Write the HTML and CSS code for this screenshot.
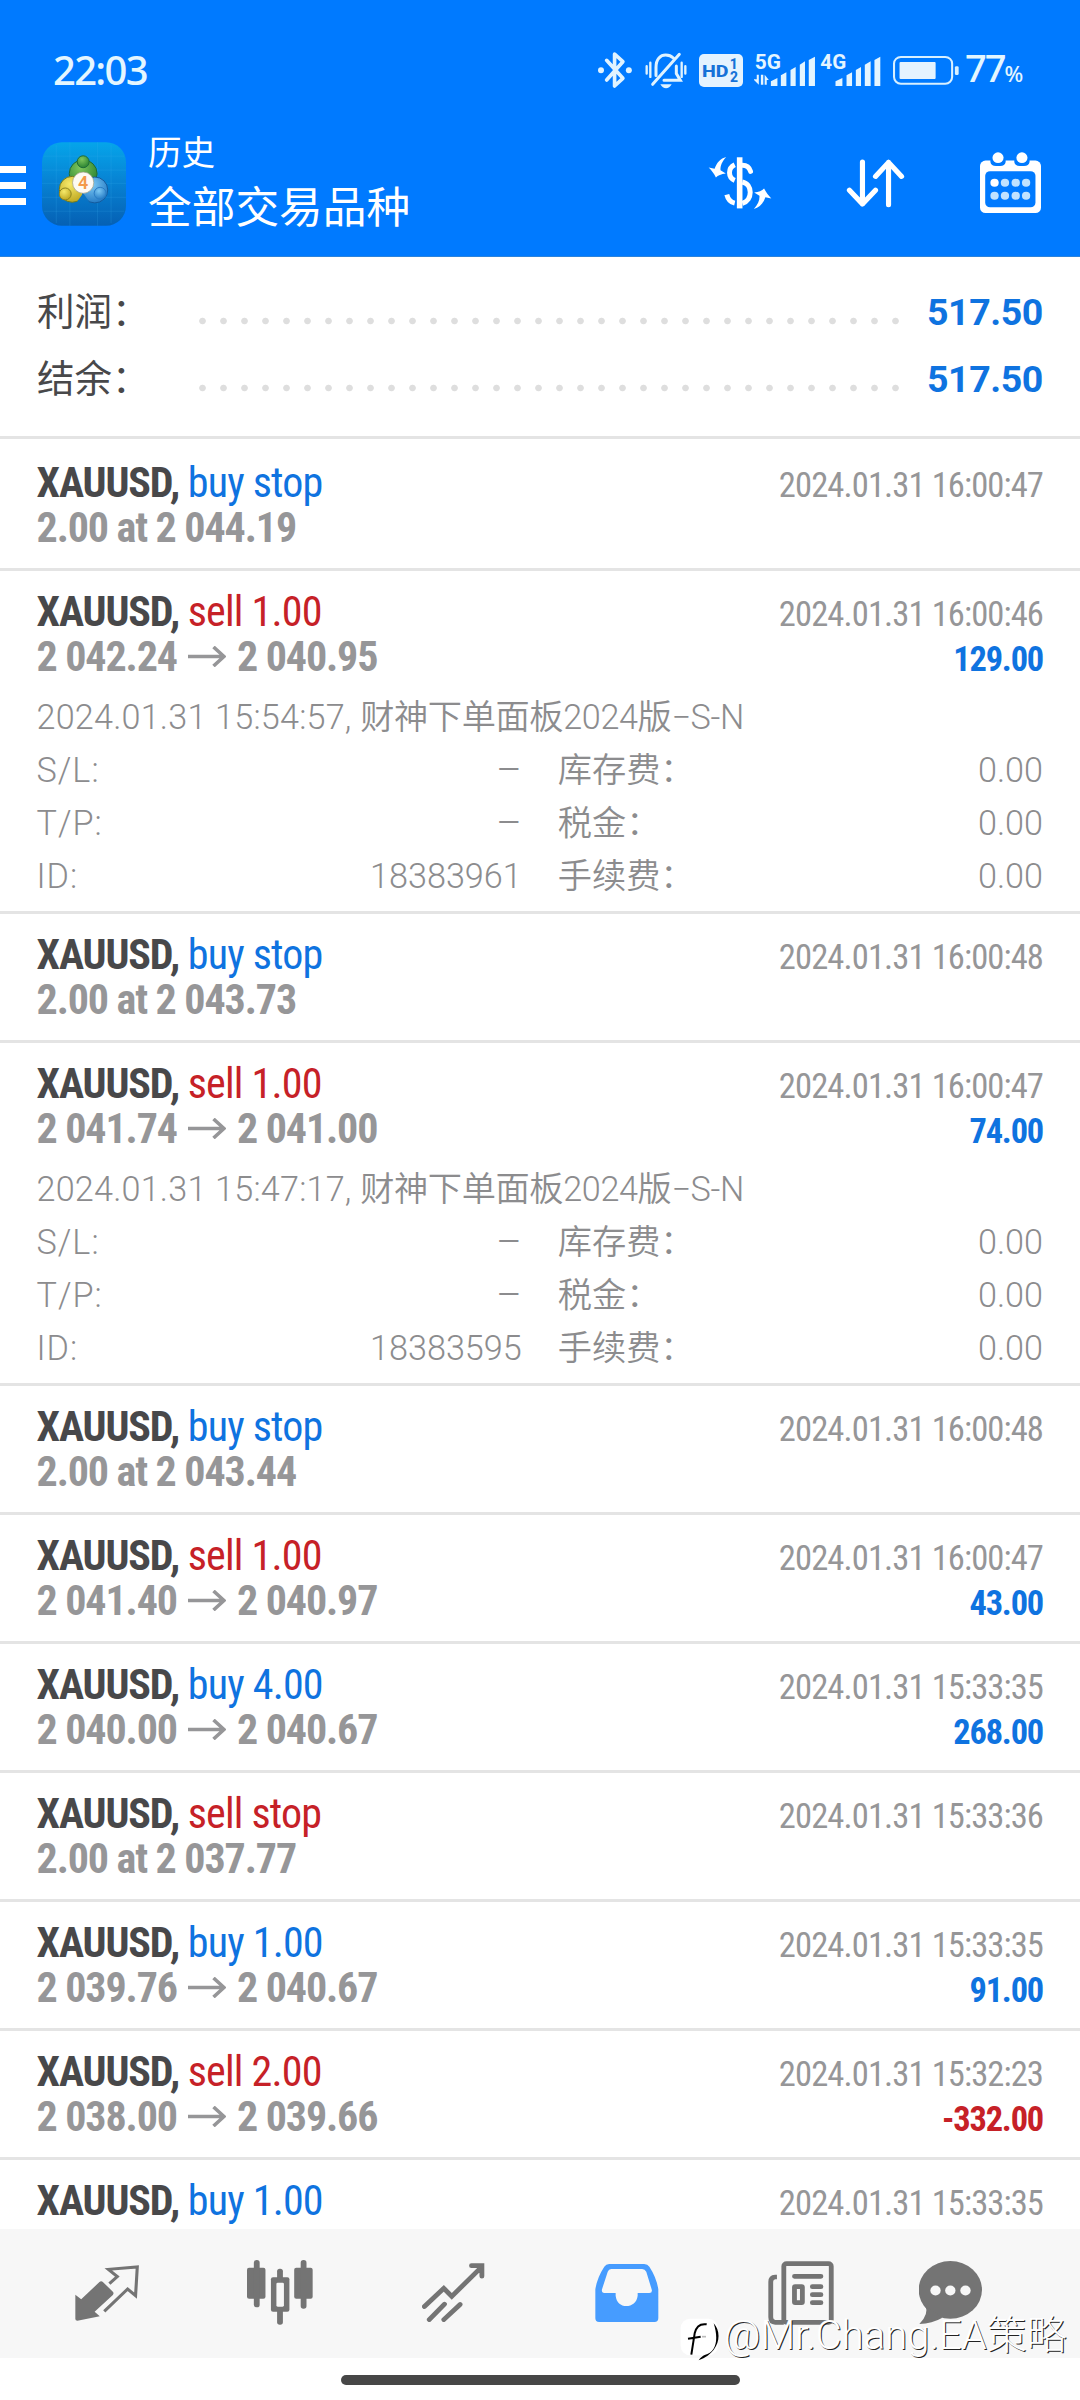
FILE: index.html
```html
<!DOCTYPE html>
<html lang="zh-CN">
<head>
<meta charset="utf-8">
<title>历史</title>
<link rel="stylesheet" href="styles.css">
</head>
<body>
<div class="screen">
  <header class="top">
    <div class="status">
      <span class="clock">22:03</span>
      <svg class="bt" viewBox="22 16 104 114" preserveAspectRatio="none"><path d="M48 44L97 98L72 121V25L97 48L48 103" fill="none" stroke="#e0f3ff" stroke-width="11" stroke-linejoin="round" stroke-linecap="round"/><circle cx="31" cy="74" r="9" fill="#e0f3ff"/><circle cx="115" cy="74" r="9" fill="#e0f3ff"/></svg>
      <svg class="bell" viewBox="165 20 126 110" preserveAspectRatio="none"><g fill="none" stroke="#e0f3ff" stroke-width="9" stroke-linecap="round"><path d="M198 90V66C198 40 212 29 227 29C237 29 245 33 250 38M188 116L268 27M259 62V84L271 104H222"/><path d="M170 62V84M181 52V94M275 52V94M286 62V84" stroke-width="7"/></g><path d="M211 116H245Q238 128 228 128T211 116Z" fill="#e0f3ff"/></svg>
      <svg class="hd" viewBox="326 24 133 100" preserveAspectRatio="none"><rect x="326" y="24" width="133" height="100" rx="15" fill="#e4f3ff"/><g fill="#1672d8" font-family="Roboto" font-weight="800"><text x="335" y="93" font-size="52" textLength="80" lengthAdjust="spacingAndGlyphs">HD</text><text x="419" y="69" font-size="42">1</text><text x="420" y="110" font-size="42">2</text></g></svg>
      <svg class="sig5" viewBox="620 140 180 120" preserveAspectRatio="none"><g fill="#e4f5ff"><text x="622" y="204" font-family="Roboto" font-weight="700" font-size="59" textLength="76" lengthAdjust="spacingAndGlyphs">5G</text><path d="M628 220H634V250L618 234H628ZM640 220H647V250H640ZM651 250V220L663 236H657V250Z"/><path d="M669 240L688 230V254H669ZM698 222L714 213V254H698ZM726 206L741 197V254H726ZM753 190L768 180V254H753ZM779 176L797 166V254H779Z"/></g></svg>
      <svg class="sig4" viewBox="813 140 177 120" preserveAspectRatio="none"><g fill="#e4f5ff"><text x="814" y="204" font-family="Roboto" font-weight="700" font-size="59" textLength="75" lengthAdjust="spacingAndGlyphs">4G</text><path d="M858 240L878 230V254H858ZM890 222L906 213V254H890ZM917 206L932 197V254H917ZM943 190L960 180V254H943ZM971 176L988 166V254H971Z"/></g></svg>
      <svg class="bat" viewBox="1026 164 192 88" preserveAspectRatio="none"><rect x="1029" y="167" width="169" height="81" rx="20" fill="none" stroke="#d8f0ff" stroke-width="6"/><rect x="1045" y="182" width="105" height="52" rx="3" fill="#e4f3ff"/><rect x="1206" y="195" width="11" height="27" rx="4" fill="#d8f0ff"/></svg>
      <span class="pct">77<small>%</small></span>
    </div>
    <div class="bar">
      <div class="menu"><i></i><i></i><i></i></div>
      <svg class="logo" viewBox="7 6 253 252"><defs><linearGradient id="bg" x1="0" y1="0" x2="0" y2="1"><stop offset="0" stop-color="#05a5ea"/><stop offset=".45" stop-color="#0784d4"/><stop offset="1" stop-color="#0560b4"/></linearGradient><radialGradient id="gr" cx=".4" cy=".3" r=".8"><stop offset="0" stop-color="#7fc65c"/><stop offset="1" stop-color="#1f7a2c"/></radialGradient><radialGradient id="ye" cx=".4" cy=".3" r=".8"><stop offset="0" stop-color="#f6e96a"/><stop offset="1" stop-color="#b8a018"/></radialGradient><radialGradient id="bl" cx=".4" cy=".3" r=".8"><stop offset="0" stop-color="#7cc8f4"/><stop offset="1" stop-color="#1a72c0"/></radialGradient></defs>
        <rect x="7" y="6" width="253" height="252" rx="60" fill="url(#bg)"/>
        <path d="M50 14V250M91 6V258M174 6V258M215 14V250M12 48H255M7 90H260M7 130H260M7 172H260M12 214H255" stroke="#3fb2ee" stroke-opacity=".3" stroke-width="2"/>
        <g stroke-width="3"><circle cx="131" cy="101" r="42" fill="url(#gr)" stroke="#1d6b38"/><circle cx="98" cy="148" r="39" fill="url(#ye)" stroke="#6d7a20"/><circle cx="166" cy="150" r="39" fill="url(#bl)" stroke="#135a9c"/><path d="M131 160L112 186Q131 176 150 186Z" fill="#0a74c4" stroke="none"/><circle cx="131" cy="65" r="18" fill="url(#gr)" stroke="#1d6b38"/><circle cx="77" cy="162" r="18" fill="url(#ye)" stroke="#8c8420"/><circle cx="182" cy="160" r="18" fill="url(#bl)" stroke="#2a7cc4"/></g>
        <circle cx="131" cy="128" r="32" fill="#fdfaf4" stroke="#9a9a80" stroke-width="2"/><text x="131" y="147" text-anchor="middle" font-family="Roboto" font-size="54" font-weight="600" fill="#f39a4a">4</text></svg>
      <div class="titles"><div class="sub">历史</div><div class="main">全部交易品种</div></div>
      <svg class="cur" viewBox="22 34 194 162"><g fill="none" stroke="#fff" stroke-width="15"><path d="M118 37V192" stroke-width="17" stroke-linecap="butt"/><path d="M126 61C141 61 148 69 151 80" stroke-linecap="round"/><path d="M103 60C82 70 82 98 103 107M126 112C158 118 158 168 126 177M103 176C90 173 83 166 79 150"/></g><path id="ar" d="M77 36C64 50 59 64 60 76L76 86C62 88 52 92 46 98C40 86 32 76 24 68L42 72C48 54 60 40 77 36Z" fill="#fff"/><use href="#ar" transform="rotate(180 119 115)"/></svg>
      <svg class="sort" viewBox="888 478 172 146" preserveAspectRatio="none"><path d="M936 487V612M898 571L936 612L974 571M1012 614V488M974 530L1012 488L1050 530" fill="none" stroke="#fff" stroke-width="15" stroke-linecap="round" stroke-linejoin="round"/></svg>
      <svg class="cal" viewBox="1278 454 176 184" preserveAspectRatio="none"><rect x="1278" y="480" width="176" height="158" rx="16" fill="#fff"/><rect x="1293" y="512" width="145" height="109" rx="14" fill="#007aff"/><path d="M1308 478V484Q1310 496 1324 496H1336Q1350 496 1352 484V478ZM1377 478V484Q1379 496 1393 496H1405Q1419 496 1421 484V478Z" fill="#007aff"/><circle cx="1330" cy="471" r="16" fill="#fff"/><circle cx="1399" cy="471" r="16" fill="#fff"/><g fill="#c0e2ff"><circle cx="1320" cy="547" r="12" fill="#fff"/><circle cx="1350" cy="547" r="12"/><circle cx="1381" cy="547" r="12"/><circle cx="1411" cy="547" r="12"/><circle cx="1320" cy="586" r="12"/><circle cx="1350" cy="586" r="12"/><circle cx="1381" cy="586" r="12"/><circle cx="1411" cy="586" r="12"/></g></svg>
    </div>
  </header>

  <main class="list">
    <section class="summary">
      <div class="sum"><span class="lbl">利润：</span><span class="dots"></span><b>517.50</b></div>
      <div class="sum"><span class="lbl">结余：</span><span class="dots"></span><b>517.50</b></div>
    </section>

    <article class="row"><div class="l1"><span class="sym">XAUUSD, <em class="buy">buy stop</em></span><time>2024.01.31 16:00:47</time></div><div class="l2"><span class="px">2.00 at 2 044.19</span></div></article>

    <article class="row open"><div class="l1"><span class="sym">XAUUSD, <em class="sell">sell 1.00</em></span><time>2024.01.31 16:00:46</time></div><div class="l2"><span class="px"><span>2 042.24</span><svg class="to" viewBox="0 0 38 21"><path d="M0 10.5H36M25.5 1L36 10.5L25.5 20"/></svg><span>2 040.95</span></span><span class="pl">129.00</span></div>
      <div class="detail"><div class="note"><span class="when">2024.01.31 15:54:57, </span>财神下单面板2024版−S-N</div>
        <div class="grid"><div><span class="key">S/L:</span><span class="dash">–</span></div><div><span>库存费：</span><span>0.00</span></div><div><span class="key">T/P:</span><span class="dash">–</span></div><div><span>税金：</span><span>0.00</span></div><div><span class="key">ID:</span><span>18383961</span></div><div><span>手续费：</span><span>0.00</span></div></div></div></article>

    <article class="row"><div class="l1"><span class="sym">XAUUSD, <em class="buy">buy stop</em></span><time>2024.01.31 16:00:48</time></div><div class="l2"><span class="px">2.00 at 2 043.73</span></div></article>

    <article class="row open"><div class="l1"><span class="sym">XAUUSD, <em class="sell">sell 1.00</em></span><time>2024.01.31 16:00:47</time></div><div class="l2"><span class="px"><span>2 041.74</span><svg class="to" viewBox="0 0 38 21"><path d="M0 10.5H36M25.5 1L36 10.5L25.5 20"/></svg><span>2 041.00</span></span><span class="pl">74.00</span></div>
      <div class="detail"><div class="note"><span class="when">2024.01.31 15:47:17, </span>财神下单面板2024版−S-N</div>
        <div class="grid"><div><span class="key">S/L:</span><span class="dash">–</span></div><div><span>库存费：</span><span>0.00</span></div><div><span class="key">T/P:</span><span class="dash">–</span></div><div><span>税金：</span><span>0.00</span></div><div><span class="key">ID:</span><span>18383595</span></div><div><span>手续费：</span><span>0.00</span></div></div></div></article>

    <article class="row"><div class="l1"><span class="sym">XAUUSD, <em class="buy">buy stop</em></span><time>2024.01.31 16:00:48</time></div><div class="l2"><span class="px">2.00 at 2 043.44</span></div></article>
    <article class="row"><div class="l1"><span class="sym">XAUUSD, <em class="sell">sell 1.00</em></span><time>2024.01.31 16:00:47</time></div><div class="l2"><span class="px"><span>2 041.40</span><svg class="to" viewBox="0 0 38 21"><path d="M0 10.5H36M25.5 1L36 10.5L25.5 20"/></svg><span>2 040.97</span></span><span class="pl">43.00</span></div></article>
    <article class="row"><div class="l1"><span class="sym">XAUUSD, <em class="buy">buy 4.00</em></span><time>2024.01.31 15:33:35</time></div><div class="l2"><span class="px"><span>2 040.00</span><svg class="to" viewBox="0 0 38 21"><path d="M0 10.5H36M25.5 1L36 10.5L25.5 20"/></svg><span>2 040.67</span></span><span class="pl">268.00</span></div></article>
    <article class="row"><div class="l1"><span class="sym">XAUUSD, <em class="sell">sell stop</em></span><time>2024.01.31 15:33:36</time></div><div class="l2"><span class="px">2.00 at 2 037.77</span></div></article>
    <article class="row"><div class="l1"><span class="sym">XAUUSD, <em class="buy">buy 1.00</em></span><time>2024.01.31 15:33:35</time></div><div class="l2"><span class="px"><span>2 039.76</span><svg class="to" viewBox="0 0 38 21"><path d="M0 10.5H36M25.5 1L36 10.5L25.5 20"/></svg><span>2 040.67</span></span><span class="pl">91.00</span></div></article>
    <article class="row"><div class="l1"><span class="sym">XAUUSD, <em class="sell">sell 2.00</em></span><time>2024.01.31 15:32:23</time></div><div class="l2"><span class="px"><span>2 038.00</span><svg class="to" viewBox="0 0 38 21"><path d="M0 10.5H36M25.5 1L36 10.5L25.5 20"/></svg><span>2 039.66</span></span><span class="pl neg">-332.00</span></div></article>
    <article class="row"><div class="l1"><span class="sym">XAUUSD, <em class="buy">buy 1.00</em></span><time>2024.01.31 15:33:35</time></div></article>
  </main>

  <nav class="tabs">
    <div><svg width="64" height="56" viewBox="219 316 186 168" preserveAspectRatio="none"><path d="M220 405L237 419L290 367Q295 363 300 367L329 396Q333 401 329 406L276 456L291 470L226 483Q220 483 220 478Z" fill="#747474"/><path d="M319 372L342 351L316 329L400 322L395 408L372 388L304 455" fill="none" stroke="#747474" stroke-width="9"/></svg></div>
    <div><svg width="66" height="65" viewBox="717 301 193 195" preserveAspectRatio="none"><g fill="#747474"><rect x="717" y="324" width="54" height="93" rx="6"/><rect x="737" y="301" width="17" height="142" rx="8"/><rect x="855" y="324" width="54" height="93" rx="6"/><rect x="874" y="301" width="17" height="146" rx="8"/><rect x="787" y="353" width="54" height="103" rx="6"/><rect x="805" y="327" width="17" height="168" rx="8"/></g><rect x="803" y="369" width="22" height="72" rx="4" fill="#f7f7f7"/></svg></div>
    <div><svg width="63" height="59" viewBox="1225 309 182 175" preserveAspectRatio="none"><path d="M1232 438L1288 384L1311 408L1396 322M1368 317H1398V348M1246 477L1290 431M1288 477L1335 432" fill="none" stroke="#747474" stroke-width="14" stroke-linecap="round"/></svg></div>
    <div><svg width="64" height="58" viewBox="161 309 186 174" preserveAspectRatio="none"><path fill-rule="evenodd" fill="#469cff" d="M202 309H304Q314 309 319 317Q340 350 345 385V472Q345 483 334 483H173Q162 483 162 472V385Q167 350 188 317Q193 309 202 309ZM208 324Q201 324 198 332L181 386Q180 396 188 396H221V404C223 424 236 435 252 435S283 424 285 404V396H319Q328 396 326 386L310 332Q306 324 298 324Z"/></svg></div>
    <div><svg width="66" height="64" viewBox="664 300 192 192" preserveAspectRatio="none"><g fill="none" stroke="#747474" stroke-width="14" stroke-linecap="round"><rect x="710" y="308" width="138" height="176" rx="8"/><path d="M690 348H685Q672 349 672 362V469Q672 484 685 484H710" stroke-linecap="butt"/><path d="M741 346H818M793 377H818M793 401H818M793 425H818"/><rect x="741" y="377" width="23" height="48" rx="2"/></g></svg></div>
    <div><svg width="63" height="63" viewBox="1102 301 183 190" preserveAspectRatio="none"><ellipse cx="1193" cy="388" rx="92" ry="87" fill="#747474"/><path d="M1120 435Q1132 460 1103 491Q1140 490 1170 472Z" fill="#747474"/><g fill="#f7f7f7"><circle cx="1150" cy="390" r="15"/><circle cx="1193" cy="390" r="15"/><circle cx="1237" cy="390" r="15"/></g></svg></div>
  </nav>
  <div class="gesture"><i></i></div>
  <div class="mark"><svg width="40" height="44" viewBox="30 28 120 132"><rect x="32" y="30" width="112" height="110" rx="28" fill="#fff"/><path d="M110 47C90 44 78 56 74 74L64 138M54 90L92 84" fill="none" stroke="#000" stroke-width="6"/><path d="M131 44C158 72 150 132 86 155C92 146 98 142 104 139C140 130 146 90 131 44Z" fill="#000"/><path d="M96 84H108" stroke="#bbb" stroke-width="5"/></svg><span>@Mr.Chang.EA策略</span></div>
</div>
</body>
</html>
```
FILE: styles.css
```css
* { box-sizing: border-box; }
body { margin: 0; background: #fff; font-family: Roboto, "Noto Sans CJK SC", sans-serif; }
svg { display: block; flex: none; }
.screen { position: relative; width: 1080px; height: 2400px; display: flex; flex-direction: column; overflow: hidden; }

.top { flex: none; height: 257px; background: #007aff; color: #fff; border-bottom: 1px solid #2b83dc; }
.status { height: 140px; padding: 0 57px 0 53px; display: flex; align-items: center; color: #e4f6ff; }
.clock { font: 500 40px/60px "Noto Sans", sans-serif; letter-spacing: -1.7px; margin-right: auto; }
.bt { width: 34.5px; height: 38px; margin-right: 13px; }
.bell { width: 42px; height: 37px; margin-right: 11.5px; }
.hd { width: 44px; height: 33px; margin-right: 11px; }
.sig5 { width: 62px; height: 40px; margin: -5px 4.5px 0 0; }
.sig4 { width: 61px; height: 40px; margin: -5px 12px 0 0; }
.bat { width: 66px; height: 29px; margin-right: 6px; }
.pct { width: 58px; font: 500 38px/60px "Noto Sans", sans-serif; letter-spacing: -2px; white-space: nowrap; }
.pct small { font-size: 22px; }

.bar { display: flex; height: 86px; }
.menu { width: 26px; margin: 26px 16px 0 0; display: flex; flex-direction: column; gap: 9px; }
.menu i { height: 7px; background: #fff; }
.logo { width: 84px; height: 84px; margin: 2px 22px 0 0; }
.titles { flex: 1; margin-top: -9px; }
.sub { font-size: 33.6px; line-height: 46px; }
.main { font-size: 43.7px; line-height: 62px; }
.cur { width: 64px; height: 54px; margin: 16px 74px 0 0; }
.sort { width: 59px; height: 49px; margin: 19px 75px 0 0; }
.cal { width: 61px; height: 61px; margin: 12px 39px 0 0; }

.list { flex: 1; min-height: 0; overflow: hidden; }
.summary { height: 182px; padding: 22px 37px 0; border-bottom: 3px solid #e4e4e4; }
.sum { display: flex; height: 67px; line-height: 67px; font-size: 37.5px; color: #48484a; }
.lbl { width: 155px; }
.dots { width: 714px; height: 8px; margin-top: 38px; background: radial-gradient(circle, #dedede 2.9px, transparent 3.7px) 0 0 / 21px 8px repeat-x; }
.sum b { margin-left: auto; color: #0f73e0; letter-spacing: -0.4px; }

.row { padding: 18px 37px 18px 36.5px; border-bottom: 3px solid #e4e4e4; }
.summary + .row { padding-top: 21px; }
.row.open { padding-bottom: 8px; }
.l1, .l2 { display: flex; justify-content: space-between; height: 45px; line-height: 45px; font-family: "Roboto Condensed", sans-serif; white-space: nowrap; align-items: baseline; }
.sym { font-size: 42px; font-weight: 700; color: #48484a; letter-spacing: -1.1px; }
.sym em { font-style: normal; font-weight: 400; letter-spacing: -0.8px; }
.sym .buy { color: #0f73e0; }
.sym .sell { color: #c62127; }
time { font-size: 34.6px; letter-spacing: -0.9px; color: #969698; }
.px { font-size: 42px; font-weight: 700; color: #969698; letter-spacing: -1.1px; display: flex; align-items: center; }
.to { width: 38px; height: 21px; margin: 0 11px; fill: none; stroke: #969698; stroke-width: 3.6; }
.pl { font-size: 34.4px; font-weight: 700; letter-spacing: -1.2px; color: #0f73e0; }
.neg { color: #c62127; }
.detail { padding-top: 12px; font-size: 34.2px; font-weight: 350; line-height: 53px; color: #8c8c8e; }
.grid { display: grid; grid-template-columns: 1fr 1fr; column-gap: 36px; }
.grid div { display: flex; justify-content: space-between; height: 53px; }
.note { height: 53px; white-space: pre; letter-spacing: -0.35px; }
.when { letter-spacing: 0.2px; }
.key { letter-spacing: 1px; }
.dash { font-size: 39px; }

.tabs { flex: none; height: 129px; background: #f7f7f7; display: flex; padding: 0 0 2px 20px; align-items: center; }
.tabs div { width: 173.5px; display: flex; justify-content: center; }
.tabs div:last-child { width: 125px; }
.gesture { flex: none; height: 42px; padding-top: 17px; display: flex; justify-content: center; }
.gesture i { width: 399px; height: 10px; border-radius: 5px; background: #474747; }
.mark { position: absolute; left: 680px; top: 2318px; display: flex; }
.mark span { margin: -4px 0 0 4px; font: 300 40px/44px Roboto, "Noto Sans CJK SC", sans-serif; color: #fff; text-shadow: 1px 1px 0 #222; white-space: nowrap; }
```
